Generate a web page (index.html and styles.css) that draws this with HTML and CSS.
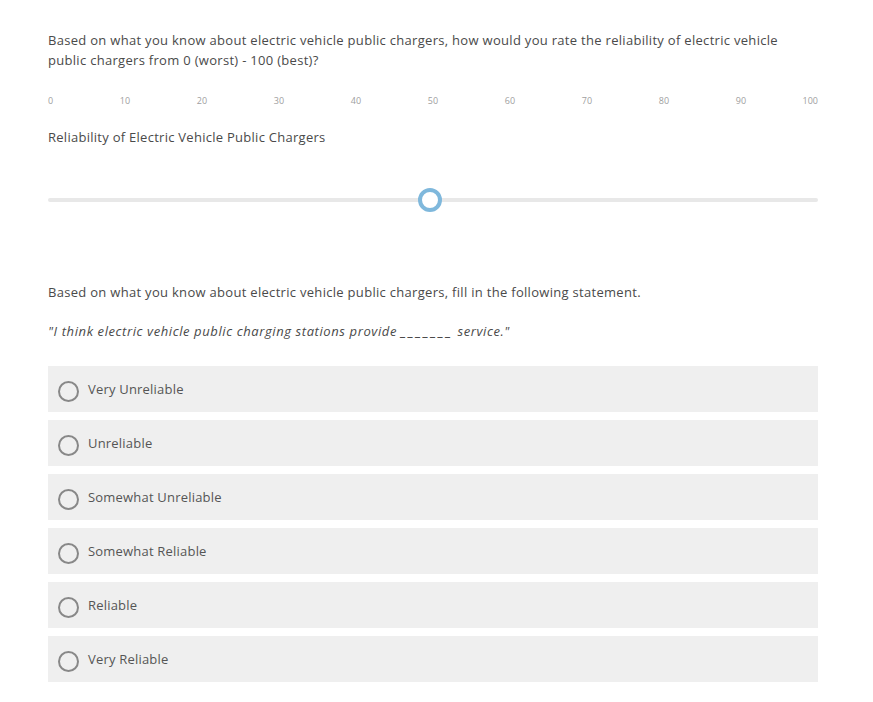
FILE: index.html
```html
<!DOCTYPE html>
<html>
<head>
<meta charset="utf-8">
<link rel="stylesheet" href="styles.css">
</head>
<body>
<div class="page">
  <section class="q q-slider">
    <p class="q-text">Based on what you know about electric vehicle public chargers, how would you rate the reliability of electric vehicle public chargers from 0 (worst) - 100 (best)?</p>
    <div class="ticks">
      <span class="tick first">0</span>
      <span class="tick">10</span>
      <span class="tick">20</span>
      <span class="tick">30</span>
      <span class="tick">40</span>
      <span class="tick">50</span>
      <span class="tick">60</span>
      <span class="tick">70</span>
      <span class="tick">80</span>
      <span class="tick">90</span>
      <span class="tick last">100</span>
    </div>
    <div class="slider-label">Reliability of Electric Vehicle Public Chargers</div>
    <div class="track">
      <div class="thumb" style="left: 49.6%"></div>
    </div>
  </section>

  <section class="q q-choice">
    <p class="q-text">Based on what you know about electric vehicle public chargers, fill in the following statement.</p>
    <p class="statement">"I think electric vehicle public charging stations provide <span class="blank">_______</span> service."</p>
    <ul class="options">
      <li class="option"><span class="radio"></span><span class="opt-label">Very Unreliable</span></li>
      <li class="option"><span class="radio"></span><span class="opt-label">Unreliable</span></li>
      <li class="option"><span class="radio"></span><span class="opt-label">Somewhat Unreliable</span></li>
      <li class="option"><span class="radio"></span><span class="opt-label">Somewhat Reliable</span></li>
      <li class="option"><span class="radio"></span><span class="opt-label">Reliable</span></li>
      <li class="option"><span class="radio"></span><span class="opt-label">Very Reliable</span></li>
    </ul>
  </section>
</div>
</body>
</html>
```

FILE: styles.css
```css
html, body {
  margin: 0;
  padding: 0;
  background: #ffffff;
}
body {
  font-family: "Open Sans", "Liberation Sans", sans-serif;
  color: #555555;
}
.page {
  width: 770px;
  margin-left: 48px;
  padding-top: 30px;
}
.q-text {
  margin: 0;
  font-size: 13px;
  line-height: 20px;
  letter-spacing: 0.3px;
  color: #4a4a4a;
}
.q-slider .q-text {
  max-width: 760px;
}
.ticks {
  display: flex;
  margin-top: 25px;
  height: 12px;
  font-size: 9px;
  line-height: 12px;
  color: #a0a0a0;
}
.tick {
  flex: 1;
  text-align: center;
}
.tick.first, .tick.last {
  flex: 0.5;
}
.tick.first { text-align: left; }
.tick.last { text-align: right; }
.slider-label {
  margin-top: 20px;
  font-size: 13px;
  line-height: 20px;
  letter-spacing: 0.27px;
  color: #4a4a4a;
}
.track {
  position: relative;
  margin-top: 51px;
  height: 4px;
  border-radius: 2px;
  background: #e8e8e8;
}
.thumb {
  position: absolute;
  top: 50%;
  width: 16px;
  height: 16px;
  border: 4px solid #7fb8dc;
  border-radius: 50%;
  background: #ffffff;
  transform: translate(-50%, -50%);
}
.q-choice {
  margin-top: 80px;
}
.statement {
  margin: 19px 0 0;
  font-size: 13px;
  line-height: 20px;
  letter-spacing: 0.6px;
  font-style: italic;
  color: #4a4a4a;
}
.blank {
  letter-spacing: 2.4px;
}
.options {
  list-style: none;
  margin: 25px 0 0;
  padding: 0;
  display: flex;
  flex-direction: column;
  gap: 8px;
}
.option {
  height: 46px;
  background: #efefef;
  display: flex;
  align-items: center;
  padding-left: 10px;
}
.radio {
  width: 17px;
  height: 17px;
  border: 2px solid #888888;
  border-radius: 50%;
  margin-top: 4px;
  box-sizing: content-box;
}
.opt-label {
  margin-left: 9px;
  font-size: 13px;
  letter-spacing: 0.2px;
  color: #555555;
}
```
